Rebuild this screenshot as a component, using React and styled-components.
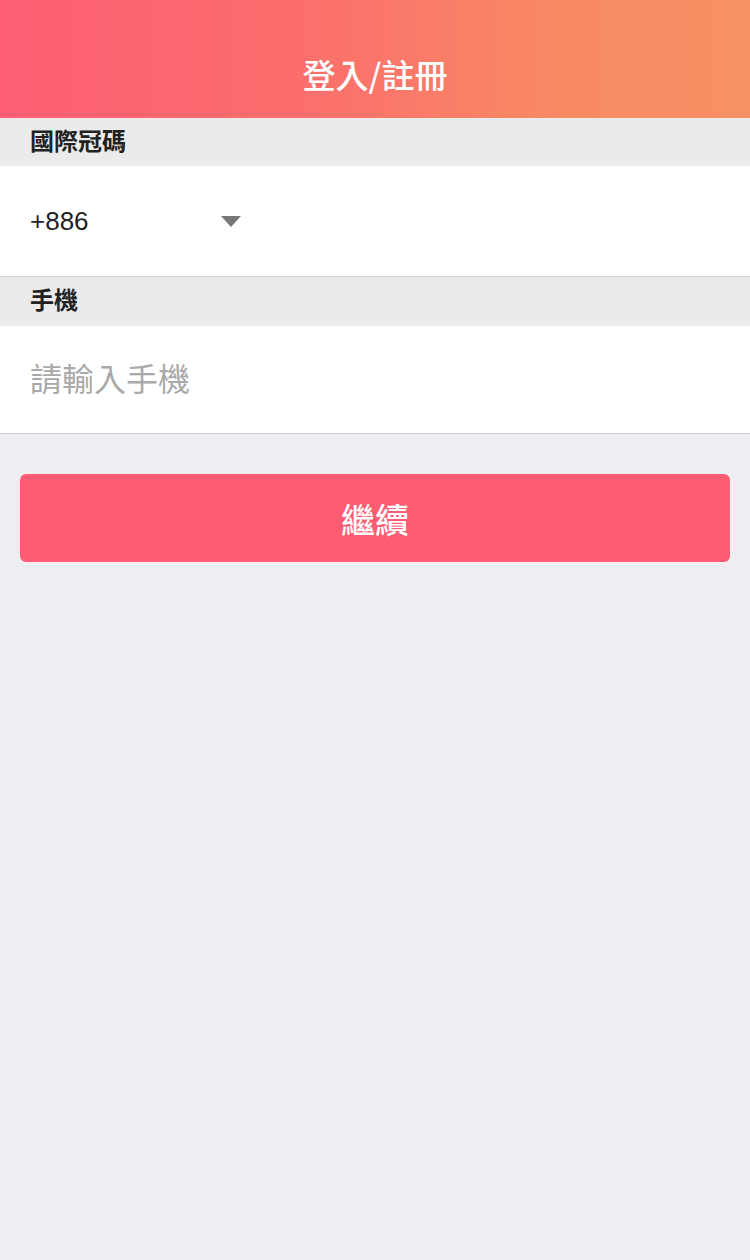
import React from 'react'
import styled, { createGlobalStyle } from 'styled-components'

const GlobalStyle = createGlobalStyle`
  html, body {
    margin: 0;
    padding: 0;
    background-color: #eeeef2;
    font-family: "Noto Sans CJK TC", "Noto Sans", sans-serif;
  }
`

const Page = styled.main`
  min-height: 1260px;
  background-color: #eeeef2;
`

const Header = styled.header`
  height: 118px;
  box-sizing: border-box;
  padding-top: 30px;
  display: flex;
  justify-content: center;
  align-items: center;
  background: linear-gradient(90deg, #fd5e74 0%, #fb6e6c 40%, #f88a64 75%, #f79163 100%);
`

const Title = styled.h1`
  margin: 0;
  color: #ffffff;
  font-size: 33px;
  font-weight: 500;
  letter-spacing: 0;
`

const Label = styled.div`
  height: ${p => p.h}px;
  box-sizing: border-box;
  display: flex;
  align-items: center;
  padding: 0 0 6px 30px;
  background-color: #ebebeb;
  color: #222222;
  font-size: 24px;
  font-weight: 700;
`

const Row = styled.div`
  height: ${p => p.h}px;
  box-sizing: border-box;
  display: flex;
  align-items: center;
  padding-left: 30px;
  background-color: #ffffff;
  border-bottom: 1px solid #cfcfcf;
`

const Code = styled.span`
  width: 191px;
  font-family: "Liberation Sans", Arial, sans-serif;
  font-size: 26px;
  color: #222222;
`

const Caret = styled.span`
  width: 0;
  height: 0;
  border-left: 10px solid transparent;
  border-right: 10px solid transparent;
  border-top: 11px solid #777777;
`

const Input = styled.input`
  border: none;
  outline: none;
  padding: 0 0 6px 0;
  width: 100%;
  background: transparent;
  font-family: "Noto Sans CJK TC", sans-serif;
  font-size: 32px;
  color: #222222;
  &::placeholder {
    color: #a9a9a9;
  }
`

const Actions = styled.div`
  padding: 40px 20px;
`

const Button = styled.button`
  width: 100%;
  height: 88px;
  border: none;
  border-radius: 6px;
  background-color: #fd5c72;
  color: #ffffff;
  font-family: "Noto Sans CJK TC", sans-serif;
  font-size: 34px;
  font-weight: 500;
`

export default function App() {
  return (
    <Page>
      <GlobalStyle />
      <Header>
        <Title>登入/註冊</Title>
      </Header>
      <Label h={48}>國際冠碼</Label>
      <Row h={111}>
        <Code>+886</Code>
        <Caret />
      </Row>
      <Label h={49}>手機</Label>
      <Row h={108}>
        <Input placeholder="請輸入手機" />
      </Row>
      <Actions>
        <Button>繼續</Button>
      </Actions>
    </Page>
  )
}
